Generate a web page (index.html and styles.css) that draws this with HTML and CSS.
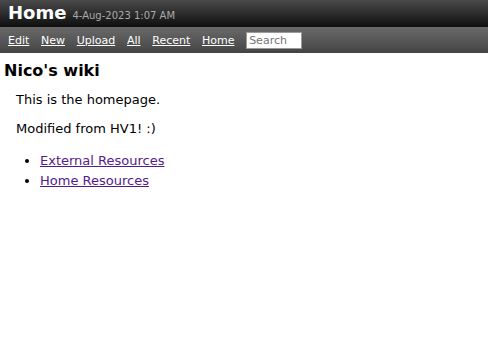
FILE: index.html
```html
<!DOCTYPE html>
<html lang="en">
<head>
  <meta charset="UTF-8" />
  <title>Home</title>
  <link rel="stylesheet" href="styles.css">
</head>
<body>
  <div class="topbar">
    <span class="page-title">Home</span>
    <span class="page-date">4-Aug-2023 1:07 AM</span>
  </div>

  <div class="navbar">
    <a href="#">Edit</a>
    <a href="#">New</a>
    <a href="#">Upload</a>
    <a href="#">All</a>
    <a href="#">Recent</a>
    <a href="#">Home</a>
    <input type="text" class="search" placeholder="Search" />
  </div>

  <div class="content">
    <h1>Nico's wiki</h1>
    <div class="body">
      <p>This is the homepage.</p>
      <p>Modified from HV1! :)</p>
      <ul>
        <li><a href="#">External Resources</a></li>
        <li><a href="#">Home Resources</a></li>
      </ul>
    </div>
  </div>
</body>
</html>
```

FILE: styles.css
```css
* {
  box-sizing: border-box;
}

body {
  margin: 0;
  font-family: 'DejaVu Sans', sans-serif;
  color: #000;
  background: #fff;
}

.topbar {
  height: 27px;
  background: linear-gradient(#4a4a4a, #0e0e0e);
  display: flex;
  align-items: baseline;
  padding: 2px 8px 0;
}

.page-title {
  color: #fff;
  font-size: 18px;
  font-weight: bold;
}

.page-date {
  color: #aaa;
  font-size: 10px;
  margin-left: 6px;
}

.navbar {
  height: 26px;
  background: linear-gradient(#6a6a6a, #444);
  display: flex;
  align-items: center;
  padding: 0 8px;
  gap: 11.7px;
}

.navbar a {
  color: #fff;
  font-size: 11px;
}

.search {
  width: 56px;
  height: 17px;
  padding: 0 2px;
  border: 1px solid #999;
  font-family: 'DejaVu Sans', sans-serif;
  font-size: 11px;
}

.content {
  padding: 4px 4px;
}

h1 {
  font-size: 16px;
  margin: 4px 0 12px;
}

.body {
  padding-left: 12px;
  font-size: 13px;
}

.body p {
  margin: 0 0 14px;
}

.body ul {
  margin: 0;
  padding: 1px 0 0 24px;
}

.body li {
  line-height: 20px;
}

.body a {
  color: #551a8b;
}
```
